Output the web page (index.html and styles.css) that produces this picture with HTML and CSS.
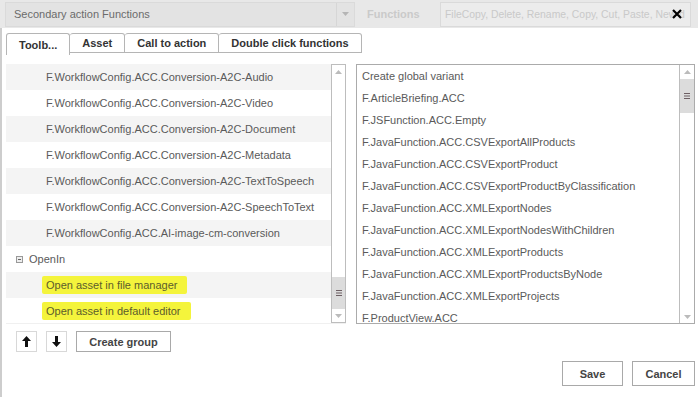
FILE: index.html
```html
<!DOCTYPE html>
<html lang="en">
<head>
    <meta charset="UTF-8">
    <title>Secondary action Functions</title>
    <link rel="stylesheet" href="styles.css">
</head>
<body>
<div class="page">
    <!-- faded filter bar behind the dialog -->
    <div class="topbar">
        <div class="combo">
            <div class="combo-text">Secondary action Functions</div>
            <div class="combo-arrow">
                <svg width="7" height="4" viewBox="0 0 7 4"><path d="M0 0H7L3.5 4Z" fill="#b5b5b5"/></svg>
            </div>
        </div>
        <div class="filter-label">Functions</div>
        <div class="filter-input">
            <span class="placeholder">FileCopy, Delete, Rename, Copy, Cut, Paste, New d</span>
            <svg class="close" width="10" height="10" viewBox="0 0 10 10"><path d="M1 1L9 9M9 1L1 9" stroke="#000" stroke-width="2.2"/></svg>
        </div>
    </div>

    <div class="dialog">
        <div class="tabs">
            <div class="tab active">Toolb...</div>
            <div class="tab">Asset</div>
            <div class="tab">Call to action</div>
            <div class="tab">Double click functions</div>
        </div>

        <div class="panels">
            <!-- toolbar functions -->
            <div class="tree">
                <div class="tree-rows">
                    <div class="row alt"><span>F.WorkflowConfig.ACC.Conversion-A2C-Audio</span></div>
                    <div class="row"><span>F.WorkflowConfig.ACC.Conversion-A2C-Video</span></div>
                    <div class="row alt"><span>F.WorkflowConfig.ACC.Conversion-A2C-Document</span></div>
                    <div class="row"><span>F.WorkflowConfig.ACC.Conversion-A2C-Metadata</span></div>
                    <div class="row alt"><span>F.WorkflowConfig.ACC.Conversion-A2C-TextToSpeech</span></div>
                    <div class="row"><span>F.WorkflowConfig.ACC.Conversion-A2C-SpeechToText</span></div>
                    <div class="row alt"><span>F.WorkflowConfig.ACC.AI-image-cm-conversion</span></div>
                    <div class="row group">
                        <svg class="toggle" width="7" height="7" viewBox="0 0 7 7"><rect x="0.5" y="0.5" width="6" height="6" fill="#eee" stroke="#999"/><path d="M2 3.5H5" stroke="#666"/></svg>
                        <span>OpenIn</span>
                    </div>
                    <div class="row alt"><span class="marker">Open asset in file manager</span></div>
                    <div class="row"><span class="marker">Open asset in default editor</span></div>
                </div>
                <div class="scrollbar">
                    <div class="sb-arrow"><svg width="7" height="4" viewBox="0 0 7 4"><path d="M0 4H7L3.5 0Z" fill="#bbb"/></svg></div>
                    <div class="sb-track">
                        <div class="sb-thumb thumb-bottom">
                            <svg width="6" height="6" viewBox="0 0 6 6"><path d="M0 .5H6M0 3H6M0 5.5H6" stroke="#6d5f63"/></svg>
                        </div>
                    </div>
                    <div class="sb-arrow"><svg width="7" height="4" viewBox="0 0 7 4"><path d="M0 0H7L3.5 4Z" fill="#bbb"/></svg></div>
                </div>
            </div>

            <!-- available functions -->
            <div class="list">
                <div class="list-items">
                    <div class="item">Create global variant</div>
                    <div class="item">F.ArticleBriefing.ACC</div>
                    <div class="item">F.JSFunction.ACC.Empty</div>
                    <div class="item">F.JavaFunction.ACC.CSVExportAllProducts</div>
                    <div class="item">F.JavaFunction.ACC.CSVExportProduct</div>
                    <div class="item">F.JavaFunction.ACC.CSVExportProductByClassification</div>
                    <div class="item">F.JavaFunction.ACC.XMLExportNodes</div>
                    <div class="item">F.JavaFunction.ACC.XMLExportNodesWithChildren</div>
                    <div class="item">F.JavaFunction.ACC.XMLExportProducts</div>
                    <div class="item">F.JavaFunction.ACC.XMLExportProductsByNode</div>
                    <div class="item">F.JavaFunction.ACC.XMLExportProjects</div>
                    <div class="item">F.ProductView.ACC</div>
                </div>
                <div class="scrollbar">
                    <div class="sb-arrow"><svg width="7" height="4" viewBox="0 0 7 4"><path d="M0 4H7L3.5 0Z" fill="#bbb"/></svg></div>
                    <div class="sb-track">
                        <div class="sb-thumb thumb-top">
                            <svg width="6" height="6" viewBox="0 0 6 6"><path d="M0 .5H6M0 3H6M0 5.5H6" stroke="#6d5f63"/></svg>
                        </div>
                    </div>
                    <div class="sb-arrow"><svg width="7" height="4" viewBox="0 0 7 4"><path d="M0 0H7L3.5 4Z" fill="#bbb"/></svg></div>
                </div>
            </div>
        </div>

        <div class="tools">
            <button class="icon-btn">
                <svg width="9" height="11" viewBox="0 0 9 11"><path d="M4.5 0L9 5H6V11H3V5H0Z" fill="#111"/></svg>
            </button>
            <button class="icon-btn">
                <svg width="9" height="11" viewBox="0 0 9 11"><path d="M4.5 11L9 6H6V0H3V6H0Z" fill="#111"/></svg>
            </button>
            <button class="btn group-btn">Create group</button>
        </div>

        <div class="footer">
            <button class="btn save-btn">Save</button>
            <button class="btn cancel-btn">Cancel</button>
        </div>
    </div>
</div>
</body>
</html>
```

FILE: styles.css
```css
body {
    margin: 0;
    font-family: "Liberation Sans", Arial, sans-serif;
    font-size: 11px;
    color: #5a5a5a;
    background-color: #fff;
}

.page {
    width: 698px;
    height: 397px;
    display: flex;
    flex-direction: column;
    overflow: hidden;
}

/* faded bar at the top */
.topbar {
    height: 28px;
    flex-shrink: 0;
    background-color: #e8e8e8;
    display: flex;
    align-items: center;
    padding-left: 5px;
    box-sizing: border-box;
}

.combo {
    width: 350px;
    height: 25px;
    display: flex;
    background-color: #e3e3e3;
    border: 1px solid #dadada;
    box-sizing: border-box;
}

.combo-text {
    flex: 1;
    padding-left: 8px;
    line-height: 23px;
    color: #6b6b6b;
    border-right: 1px solid #d6d6d6;
}

.combo-arrow {
    width: 17px;
    display: flex;
    align-items: center;
    justify-content: center;
}

.filter-label {
    width: 72px;
    margin-left: 12px;
    font-weight: bold;
    color: #cacaca;
}

.filter-input {
    position: relative;
    width: 251px;
    height: 25px;
    margin-left: 1px;
    padding-left: 4px;
    line-height: 23px;
    color: #c9c9c9;
    background-color: #ececec;
    border: 1px solid #dadada;
    box-sizing: border-box;
    white-space: nowrap;
}

.placeholder {
    font-size: 10.4px;
}

.close {
    position: absolute;
    right: 8px;
    top: 6px;
}

/* dialog */
.dialog {
    flex: 1;
    border-left: 2px solid #cdcdcd;
    display: flex;
    flex-direction: column;
}

.tabs {
    display: flex;
    padding: 5px 0 0 4px;
}

.tab {
    height: 20px;
    line-height: 19px;
    padding: 0 12px;
    font-weight: bold;
    color: #333;
    border: 1px solid #b5b5b5;
    border-left: none;
    border-radius: 3px 3px 0 0;
    box-sizing: border-box;
}

.tab.active {
    height: 22px;
    padding-top: 2px;
    border-left: 1px solid #b5b5b5;
    border-bottom: none;
}

.panels {
    display: flex;
    gap: 10px;
    margin-top: 9px;
    padding-left: 4px;
}

.tree {
    width: 340px;
    height: 259px;
    display: flex;
    border-bottom: 1px solid #f0f0f0;
}

.tree-rows {
    flex: 1;
    overflow: hidden;
}

.row {
    height: 26px;
    display: flex;
    align-items: center;
    padding-left: 40px;
    white-space: nowrap;
}

.row.alt {
    background-color: #f4f4f4;
}

.row.group {
    padding-left: 10px;
    gap: 6px;
}

.marker {
    margin-left: -4px;
    padding: 3px 10px 3px 4px;
    background-color: #f4f43c;
    color: #5c5c2c;
    border-radius: 2px;
}

.list {
    width: 339px;
    height: 260px;
    display: flex;
    border: 1px solid #ababab;
    box-sizing: border-box;
}

.list-items {
    flex: 1;
    overflow: hidden;
    padding-top: 1px;
}

.item {
    height: 22px;
    line-height: 20px;
    padding-left: 5px;
    white-space: nowrap;
}

/* scrollbars */
.scrollbar {
    width: 15px;
    display: flex;
    flex-direction: column;
    border: 1px solid #bdbdbd;
    box-sizing: border-box;
    background-color: #fff;
}

.list .scrollbar {
    border-top: none;
    border-bottom: none;
    border-right: none;
}

.sb-arrow {
    height: 13px;
    display: flex;
    align-items: center;
    justify-content: center;
}

.sb-track {
    flex: 1;
    display: flex;
    flex-direction: column;
}

.sb-thumb {
    height: 32px;
    background-color: #dcdcdc;
    display: flex;
    align-items: center;
    justify-content: center;
}

.thumb-bottom {
    margin-top: auto;
}

.thumb-top {
    height: 34px;
    margin-top: 1px;
}

/* buttons */
.tools {
    display: flex;
    gap: 9px;
    margin-top: 7px;
    padding-left: 14px;
}

button {
    font-family: "Liberation Sans", Arial, sans-serif;
    font-size: 11px;
    font-weight: bold;
    color: #444;
    background-color: #fff;
    box-sizing: border-box;
    padding: 0;
    cursor: pointer;
}

.icon-btn {
    width: 21px;
    height: 21px;
    border: 1px solid #d8d8d8;
    display: flex;
    align-items: center;
    justify-content: center;
}

.btn {
    border: 1px solid #a9a9a9;
}

.group-btn {
    width: 95px;
    height: 21px;
}

.footer {
    display: flex;
    justify-content: flex-end;
    gap: 9px;
    margin-top: 9px;
    padding-right: 3px;
}

.save-btn {
    width: 61px;
    height: 25px;
}

.cancel-btn {
    width: 63px;
    height: 25px;
}
```
